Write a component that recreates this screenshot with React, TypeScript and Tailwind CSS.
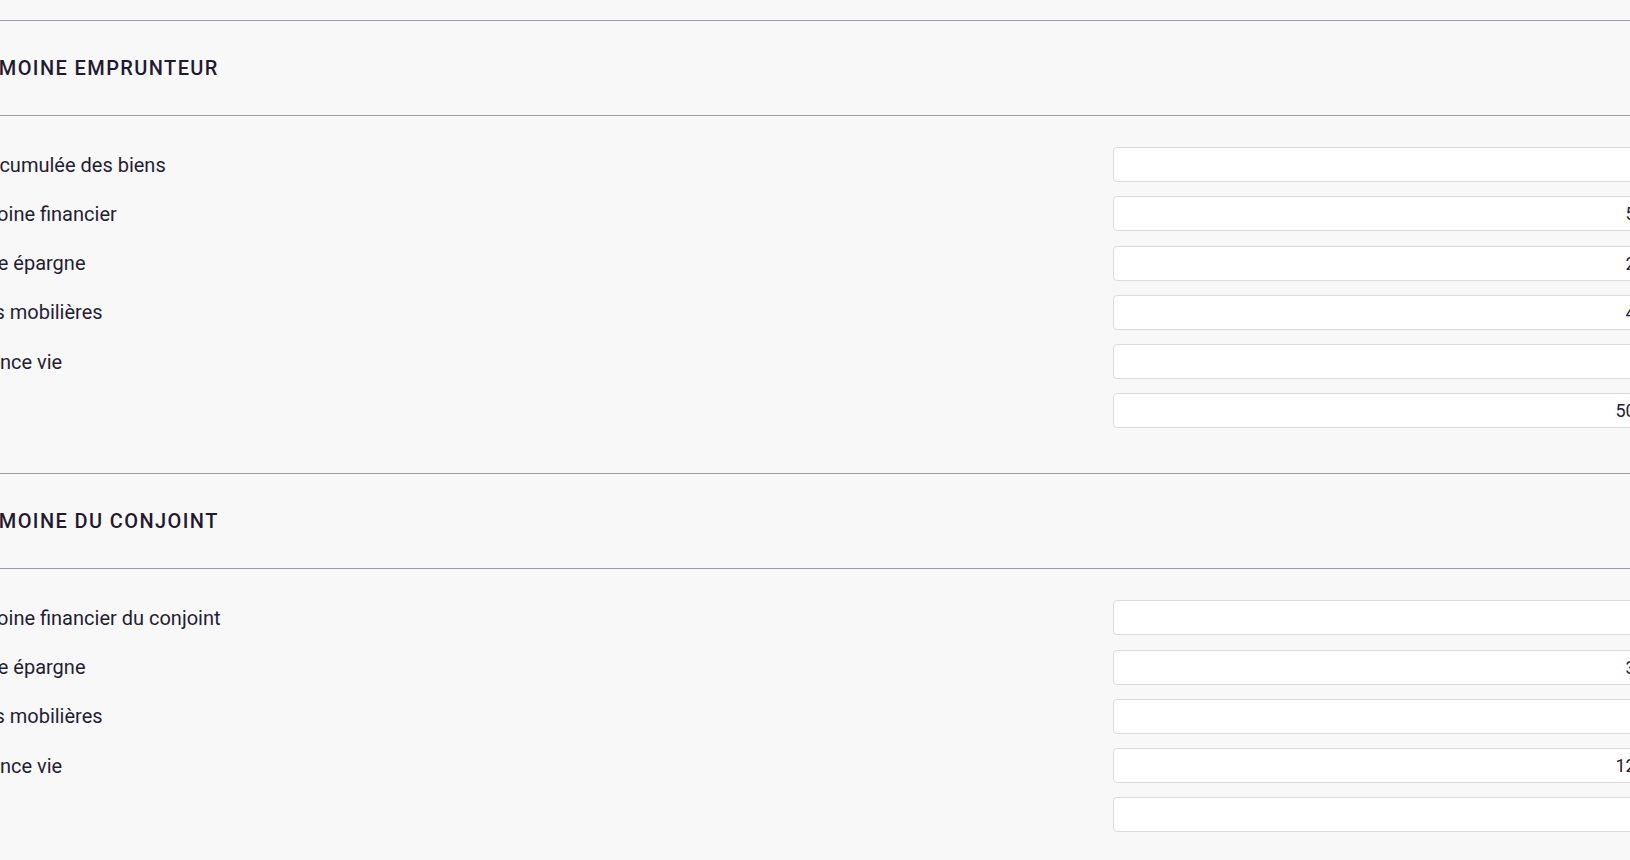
import React from 'react';

interface Field {
  label: string;
  value: string;
}

const borrower: Field[] = [
  { label: 'Valeur cumulée des biens', value: '' },
  { label: 'Patrimoine financier', value: '5000' },
  { label: 'Compte épargne', value: '2000' },
  { label: 'Valeurs mobilières', value: '4000' },
  { label: 'Assurance vie', value: '' },
  { label: 'Total', value: '50000' },
];

const spouse: Field[] = [
  { label: 'Patrimoine financier du conjoint', value: '' },
  { label: 'Compte épargne', value: '3000' },
  { label: 'Valeurs mobilières', value: '' },
  { label: 'Assurance vie', value: '12000' },
  { label: 'Total', value: '' },
];

function Section({ title, fields }: { title: string; fields: Field[] }) {
  return (
    <section className="border-t border-[#9e99a8]">
      <div className="h-[95px] flex items-center border-b border-[#9e99a8]">
        <h2 className="text-[20px] font-medium uppercase tracking-[1.4px] text-[#231a32]">{title}</h2>
      </div>
      <div className="pt-[31px] pb-[45px] flex flex-col gap-[14.25px]">
        {fields.map((f, i) => (
          <div key={i} className="grid grid-cols-[1175px_566px] items-center h-[35px]">
            <label className="text-[20px] leading-[24px] text-[#261d35]">{f.label}</label>
            <input
              readOnly
              value={f.value}
              className="h-[35px] w-full bg-white border border-[#dcdcdc] rounded-[4px] px-3 text-right text-[18px] text-[#261d35] outline-none"
            />
          </div>
        ))}
      </div>
    </section>
  );
}

export default function App() {
  return (
    <div className="h-[860px] overflow-hidden bg-[#f8f8f8] pt-[20px] font-['Roboto',sans-serif]">
      <div className="-ml-[62px] w-[1800px]">
        <Section title="Patrimoine emprunteur" fields={borrower} />
        <Section title="Patrimoine du conjoint" fields={spouse} />
      </div>
    </div>
  );
}
